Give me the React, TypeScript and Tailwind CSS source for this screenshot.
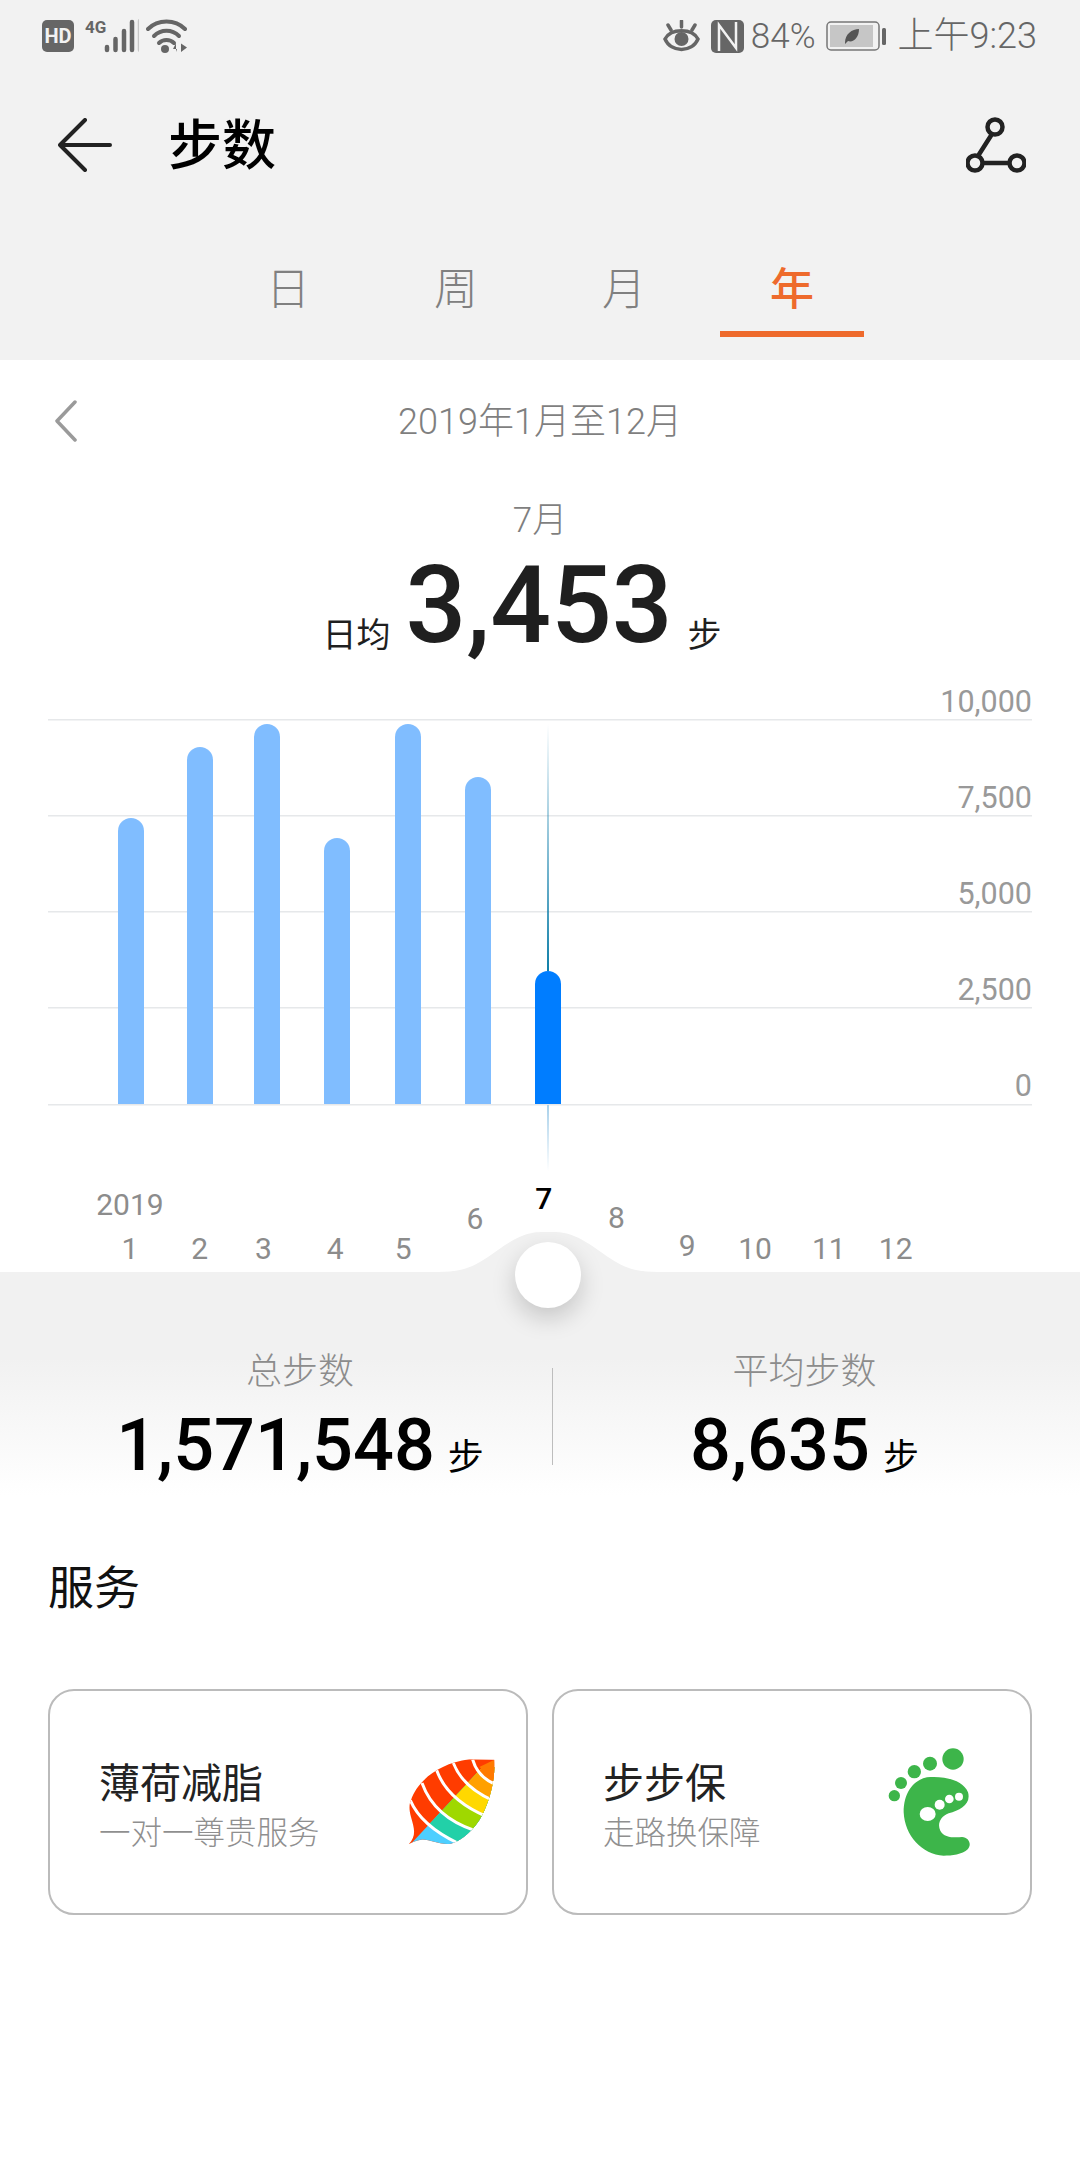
import React from "react";

const FONT = { fontFamily: 'Roboto, "Noto Sans CJK SC", sans-serif' };

const BARS = [
  { x: 131, top: 818 },
  { x: 200, top: 747 },
  { x: 267, top: 724 },
  { x: 337, top: 838 },
  { x: 408, top: 724 },
  { x: 478, top: 777 },
];

const GRID = [719, 815, 911, 1007, 1104];
const AXIS = ["10,000", "7,500", "5,000", "2,500", "0"];

const MONTHS = [
  { label: "1", top: 7, dx: 1 },
  { label: "2", top: 51, dx: 1 },
  { label: "3", top: 51, dx: -5 },
  { label: "4", top: 51, dx: -3 },
  { label: "5", top: 51, dx: -5 },
  { label: "6", top: 21, dx: -3 },
  { label: "7", top: 1, dx: -4 },
  { label: "8", top: 20, dx: -1 },
  { label: "9", top: 48, dx: 0 },
  { label: "10", top: 51, dx: -2 },
  { label: "11", top: 51, dx: 2 },
  { label: "12", top: 51, dx: -1 },
];

function barPath(x: number, top: number) {
  return `M${x - 13} 1104V${top + 13}a13 13 0 0 1 26 0V1104Z`;
}

function StatusLeft() {
  return (
    <div className="flex items-center">
      <div className="flex h-[32px] w-[32px] items-center justify-center rounded-[5px] bg-[#666] text-[20px] font-bold leading-none text-[#f2f2f2]">
        HD
      </div>
      <div className="relative ml-[11px] h-[34px] w-[54px]">
        <span className="absolute left-0 top-[-4px] text-[17px] font-bold leading-[24px] text-[#666]">4G</span>
        <svg width="54" height="34" viewBox="0 0 54 34" className="absolute left-0 top-0">
          <g fill="none" strokeWidth="4.5" strokeLinecap="round">
            <path d="M22 31v-3M30.500 31V20M39 31V12M47 31V3" stroke="#666" />
            <path d="M52 31V2" stroke="#c8c8c8" transform="translate(3 0)" />
          </g>
        </svg>
      </div>
      <svg width="42" height="36" viewBox="0 0 42 36" className="ml-[7px]">
        <g fill="none" stroke="#666" strokeWidth="4" strokeLinecap="round">
          <path d="M2 11C12 1 29 1 39 11" />
          <path d="M8 18C15 11 26 11 33 18" />
          <path d="M13 25C17 21 24 21 28 25" />
        </g>
        <circle cx="19" cy="31" r="4" fill="#666" />
        <path d="M30 34v-9l-3 6h4M35 25v9l6-4.500-6-4" fill="#666" />
      </svg>
    </div>
  );
}

function StatusRight() {
  return (
    <div className="flex items-center text-[#666]">
      <svg width="37" height="32" viewBox="0 0 37 32">
        <g fill="none" stroke="#666" strokeWidth="3.500" strokeLinecap="round">
          <path d="M2 19C8 8 29 8 35 19C29 33 8 33 2 19Z" />
          <path d="M18.500 1v6M5 5l3 5M32 5l-3 5" />
        </g>
        <circle cx="18.500" cy="19" r="7" fill="#666" />
      </svg>
      <svg width="33" height="33" viewBox="0 0 33 33" className="ml-[11px]">
        <rect width="33" height="33" rx="5" fill="#666" />
        <path d="M8 31V5l17 23V2" fill="none" stroke="#f2f2f2" strokeWidth="2.500" />
      </svg>
      <span className="ml-[7px] text-[35px] font-light leading-none">84%</span>
      <svg width="61" height="30" viewBox="0 0 61 30" className="ml-[10px]">
        <rect x="1" y="1" width="52" height="28" rx="4" fill="none" stroke="#777" strokeWidth="1.500" />
        <rect x="4" y="4" width="43" height="22" fill="#c6c6c6" />
        <path d="M19 22C19 13 26 8 33 8C33 17 27 22 22 20L19 23Z" fill="#555" />
        <rect x="56" y="7" width="4" height="17" rx="1.500" fill="#666" />
      </svg>
      <span className="ml-[11px] text-[36px] font-light leading-none">上午9:23</span>
    </div>
  );
}

function Tab({ label, active }: { label: string; active?: boolean }) {
  return (
    <div className="flex w-[144px] flex-col items-center pt-[43px]">
      <span className={active ? "text-[44px] font-medium leading-[60px] text-[#ee6a2c]" : "text-[44px] font-light leading-[60px] text-[#808080]"}>
        {label}
      </span>
      <div className={active ? "mt-[11px] h-[6px] w-full bg-[#ee6a2c]" : "mt-[11px] h-[6px] w-full"} />
    </div>
  );
}

function Chart() {
  return (
    <div className="relative h-[476px]">
      <svg width="1080" height="476" viewBox="0 704 1080 476" className="block">
        <defs>
          <linearGradient id="cursorTop" x1="0" y1="0" x2="0" y2="1">
            <stop offset="0" stopColor="#1480b0" stopOpacity="0" />
            <stop offset="1" stopColor="#0f7fa8" />
          </linearGradient>
          <linearGradient id="cursorBottom" x1="0" y1="0" x2="0" y2="1">
            <stop offset="0" stopColor="#a8d0ea" />
            <stop offset="1" stopColor="#a8d0ea" stopOpacity="0" />
          </linearGradient>
        </defs>
        {GRID.map((y) => (
          <rect key={y} x="48" y={y} width="984" height="1.500" fill="#e6e8ea" />
        ))}
        {BARS.map((b) => (
          <path key={b.x} d={barPath(b.x, b.top)} fill="#80bdff" />
        ))}
        <rect x="547" y="724" width="2" height="247" fill="url(#cursorTop)" />
        <rect x="547" y="1105" width="2" height="66" fill="url(#cursorBottom)" />
        <path d={barPath(548, 971)} fill="#007dff" />
      </svg>
      <div className="absolute right-[48px] top-[-20px] flex h-[420px] flex-col justify-between text-right text-[30.500px] leading-[36px] text-[#999]">
        {AXIS.map((a) => (
          <span key={a}>{a}</span>
        ))}
      </div>
    </div>
  );
}

function Ruler() {
  return (
    <div className="relative flex h-[92px] pl-[94px]">
      {MONTHS.map((m) => (
        <div
          key={m.label}
          className="flex w-[69.800px] flex-col items-center"
          style={{ marginTop: m.top, transform: `translateX(${m.dx}px)` }}
        >
          {m.label === "1" && <span className="mb-[8px] text-[30px] leading-[36px] text-[#8c8c8c]">2019</span>}
          <span className={m.label === "7" ? "text-[30px] font-medium leading-[36px] text-black" : "text-[30px] leading-[36px] text-[#8c8c8c]"}>
            {m.label}
          </span>
        </div>
      ))}
      <svg width="220" height="42" viewBox="0 0 220 42" className="absolute bottom-0 left-[438px]">
        <path d="M0 42C30 42 40 34 60 20C85 2 95 2 110 2C125 2 135 2 160 20C180 34 190 42 220 42Z" fill="#f1f1f1" />
      </svg>
      <div className="absolute left-[515px] top-[62px] z-10 h-[66px] w-[66px] rounded-full bg-white shadow-[0_10px_24px_rgba(0,0,0,0.18)]" />
    </div>
  );
}

function Stats() {
  return (
    <div className="grid h-[248px] grid-cols-[504px_1px_1fr] bg-[linear-gradient(#f1f1f1_35%,#ffffff_90%)] pl-[48px] pr-[48px]">
      <div className="flex flex-col items-center pt-[75px]">
        <span className="text-[36px] font-light leading-[50px] text-[#8c8c8c]">总步数</span>
        <div className="flex items-baseline leading-[98px]">
          <span className="text-[72px] font-medium text-black">1,571,548</span>
          <span className="ml-[13px] text-[36px] text-black">步</span>
        </div>
      </div>
      <div className="mt-[96px] h-[97px] w-px bg-[#bdbdbd]" />
      <div className="flex flex-col items-center pl-[24px] pt-[75px]">
        <span className="text-[36px] font-light leading-[50px] text-[#8c8c8c]">平均步数</span>
        <div className="flex items-baseline leading-[98px]">
          <span className="text-[72px] font-medium text-black">8,635</span>
          <span className="ml-[13px] text-[36px] text-black">步</span>
        </div>
      </div>
    </div>
  );
}

function LeafLogo() {
  return (
    <svg width="90" height="90" viewBox="80 110 270 270">
      <defs>
        <clipPath id="leaf">
          <path d="M88 372C112 345 105 325 95 290C88 265 90 250 95 240C110 190 170 130 270 117L345 118C348 170 335 240 300 300C270 345 235 366 215 370C180 375 150 355 125 358C110 360 100 365 88 372Z" />
        </clipPath>
        <clipPath id="half">
          <path d="M310 140L95 370L350 400L400 140Z" />
        </clipPath>
      </defs>
      <g clipPath="url(#leaf)">
        <rect x="80" y="110" width="270" height="270" fill="#ff3c00" />
        <g clipPath="url(#half)">
          <rect x="80" y="110" width="270" height="270" fill="#4dcfff" />
          <path d="M93 240Q125 315 235 368L400 370V100H93Z" fill="#22d0a8" />
          <path d="M128 188Q165 290 285 330L400 330V100H128Z" fill="#9fd800" />
          <path d="M172 150Q205 240 325 290L400 290V100H172Z" fill="#ffd800" />
          <path d="M222 128Q250 200 340 240L400 240V100H222Z" fill="#ffa000" />
          <path d="M280 118Q295 170 348 192L400 192V100H280Z" fill="#ff7a00" />
        </g>
        <path d="M300 140L345 118L348 180Z" fill="#ff7a00" />
        <g fill="none" stroke="#fff" strokeWidth="9">
          <path d="M93 240Q125 315 235 368" />
          <path d="M128 188Q165 290 285 330" />
          <path d="M172 150Q205 240 325 290" />
          <path d="M222 128Q250 200 340 240" />
          <path d="M280 118Q295 170 348 192" />
        </g>
      </g>
    </svg>
  );
}

function FootLogo() {
  return (
    <svg width="84" height="109" viewBox="88 82 252 327" fill="#3db54a">
      <circle cx="283" cy="115" r="32" />
      <circle cx="214" cy="129" r="21" />
      <circle cx="167" cy="153" r="20" />
      <circle cx="127" cy="187" r="18" />
      <circle cx="107" cy="225" r="17" />
      <path d="M205 170C260 165 315 180 328 215C338 250 305 268 270 278C245 288 235 310 245 330C255 350 285 352 310 349C330 350 340 370 328 385C310 402 280 405 255 405C190 402 138 345 135 275C135 215 165 178 205 170Z" />
      <ellipse cx="207" cy="280" rx="24" ry="21" fill="#fff" />
      <circle cx="243" cy="252" r="15" fill="#fff" />
      <circle cx="272" cy="235" r="13" fill="#fff" />
      <circle cx="301" cy="228" r="12" fill="#fff" />
    </svg>
  );
}

function ServiceCard({ title, sub, logo, pr }: { title: string; sub: string; logo: React.ReactNode; pr: string }) {
  return (
    <div className={`flex h-[226px] items-center justify-between rounded-[26px] border-2 border-[#bbbbbb] pl-[49px] ${pr}`}>
      <div className="flex flex-col pt-[8px]">
        <span className="text-[41px] leading-[54px] text-[#222]">{title}</span>
        <span className="text-[31.500px] font-light leading-[45px] text-[#8f8f8f]">{sub}</span>
      </div>
      {logo}
    </div>
  );
}

export default function App() {
  return (
    <div className="h-[2160px] w-[1080px] overflow-hidden bg-white" style={FONT}>
      <div className="h-[360px] bg-[#f2f2f2]">
        <div className="flex h-[72px] items-center justify-between pl-[42px] pr-[43px]">
          <StatusLeft />
          <StatusRight />
        </div>
        <div className="flex h-[145px] items-center justify-between pl-[58px] pr-[54px]">
          <div className="flex items-center">
            <svg width="54" height="54" viewBox="0 0 54 54" fill="none" stroke="#222" strokeWidth="4" strokeLinecap="round" strokeLinejoin="round">
              <path d="M27 2L2 27L27 52M2 27H52" />
            </svg>
            <span className="ml-[56px] pt-[5px] text-[54px] font-medium leading-none text-black">步数</span>
          </div>
          <svg width="60" height="56" viewBox="0 0 60 56" fill="none" stroke="#222" strokeWidth="4.500">
            <circle cx="29" cy="10" r="7.500" />
            <circle cx="9" cy="46" r="7.500" />
            <circle cx="51" cy="46" r="7.500" />
            <path d="M26 17L12 39M17 46H43" />
          </svg>
        </div>
        <div className="flex gap-[24px] pl-[216px]">
          <Tab label="日" />
          <Tab label="周" />
          <Tab label="月" />
          <Tab label="年" active />
        </div>
      </div>

      <div className="relative flex h-[124px] items-center justify-center">
        <svg width="24" height="42" viewBox="0 0 24 42" fill="none" stroke="#9a9a9a" strokeWidth="3.500" strokeLinecap="round" strokeLinejoin="round" className="absolute left-[54px] top-[40px]">
          <path d="M21 2L3 21L21 40" />
        </svg>
        <span className="text-[36px] font-light leading-none text-[#7f7f7f]">2019年1月至12月</span>
      </div>
      <div className="flex h-[74px] items-center justify-center text-[35px] font-light text-[#7f7f7f]">7月</div>
      <div className="flex h-[146px] items-baseline justify-center pr-[36px] leading-[96px] text-[#1f1f1f]">
        <span className="relative top-[5px] text-[34px]">日均</span>
        <span className="mx-[15px] text-[107px] font-medium">3,453</span>
        <span className="relative top-[5px] text-[34px]">步</span>
      </div>

      <Chart />
      <Ruler />
      <Stats />

      <div className="px-[48px] pt-[38px]">
        <div className="mb-[71px] text-[46px] leading-[60px] text-[#111]">服务</div>
        <div className="grid grid-cols-2 gap-[24px]">
          <ServiceCard title="薄荷减脂" sub="一对一尊贵服务" logo={<LeafLogo />} pr="pr-[30px]" />
          <ServiceCard title="步步保" sub="走路换保障" logo={<FootLogo />} pr="pr-[58px]" />
        </div>
      </div>
    </div>
  );
}
